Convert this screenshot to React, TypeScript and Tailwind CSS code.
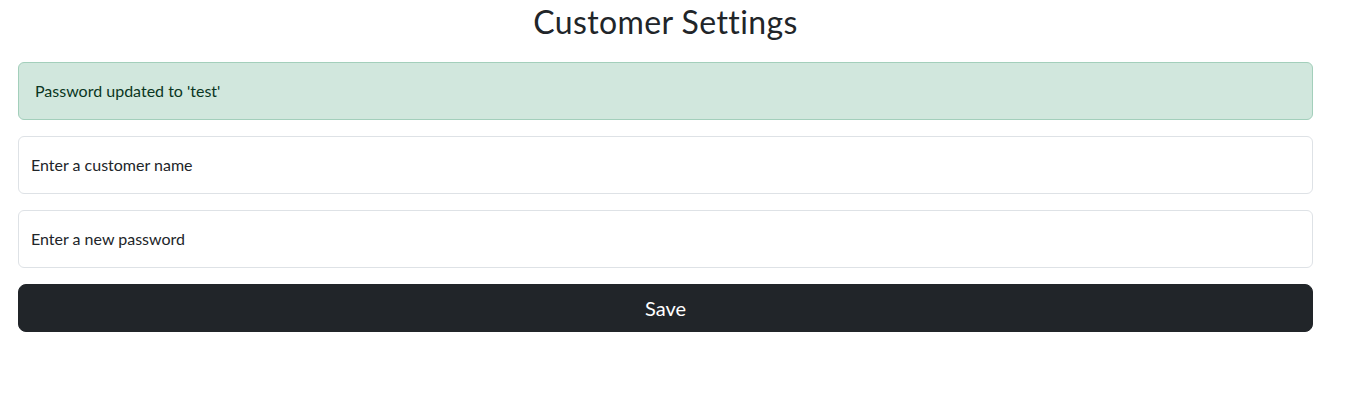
import React, { useState } from 'react';

const font = { fontFamily: 'Lato, "Noto Sans", sans-serif' };

export default function App() {
  const [name, setName] = useState('');
  const [password, setPassword] = useState('');

  return (
    <div className="min-h-[419px] bg-white text-[#212529]" style={font}>
      <div className="ml-[18px] w-[1295px]">
        {/* header */}
        <h2 className="mb-[21px] pt-[3px] text-center text-[32px] font-normal leading-[1.2] tracking-[0.4px]">
          Customer Settings
        </h2>

        {/* status message */}
        <div className="mb-4 rounded-md border border-[#a3cfbb] bg-[#d1e7dd] p-4 text-base leading-6 text-[#0a3622]">
          Password updated to 'test'
        </div>

        <input
          type="text"
          value={name}
          onChange={(e) => setName(e.target.value)}
          placeholder="Enter a customer name"
          className="mb-4 block w-full rounded-md border border-[#dee2e6] bg-white px-3 py-4 text-base leading-6 text-[#212529] placeholder:text-[#212529] outline-none"
        />

        <input
          type="password"
          value={password}
          onChange={(e) => setPassword(e.target.value)}
          placeholder="Enter a new password"
          className="mb-4 block w-full rounded-md border border-[#dee2e6] bg-white px-3 py-4 text-base leading-6 text-[#212529] placeholder:text-[#212529] outline-none"
        />

        <button className="block w-full rounded-lg border border-[#212529] bg-[#212529] px-4 py-2 text-xl leading-[30px] text-white">
          Save
        </button>
      </div>
    </div>
  );
}
